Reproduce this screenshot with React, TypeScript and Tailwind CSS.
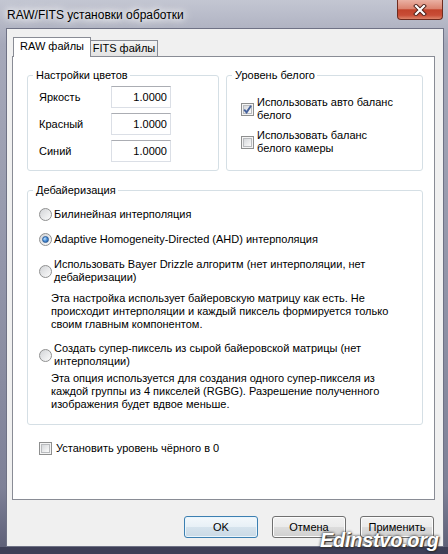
import type { ReactNode } from 'react'

function CheckBox({ checked = false }: { checked?: boolean }) {
  return (
    <span className="relative flex h-[13px] w-[13px] shrink-0 items-center justify-center border border-[#8e8f8f] bg-[#f4f4f4]">
      <span className="h-[9px] w-[9px] border border-[#b9bbbe] bg-gradient-to-br from-[#d6d8db] to-[#fbfbfb]" />
      {checked ? (
        <svg
          className="absolute left-[0px] top-[0px]"
          width="11"
          height="11"
          viewBox="0 0 11 11"
        >
          <path
            d="M2.2 5.6 L4.6 8.4 L9 1.8"
            fill="none"
            stroke="#45629d"
            strokeWidth="1.9"
          />
        </svg>
      ) : null}
    </span>
  )
}

function Radio({ checked = false }: { checked?: boolean }) {
  return (
    <span className="flex h-[13px] w-[13px] shrink-0 items-center justify-center rounded-full border border-[#8f9090] bg-gradient-to-br from-[#d2d4d7] to-[#fcfcfc]">
      {checked ? (
        <span className="h-[7px] w-[7px] rounded-full border border-[#2b5c98] bg-[radial-gradient(circle_at_35%_35%,#c4e3ff_0%,#4f95dd_45%,#1b4f93_100%)]" />
      ) : null}
    </span>
  )
}

function GroupBox({
  title,
  className,
  children,
}: {
  title: string
  className: string
  children: ReactNode
}) {
  return (
    <fieldset
      className={`min-w-0 rounded-[3px] border border-[#d5dfe5] ${className}`}
    >
      <legend className="ml-[5px] pl-[3px] pr-[2px]">{title}</legend>
      {children}
    </fieldset>
  )
}

function NumberBox({ value }: { value: string }) {
  return (
    <div className="flex h-[22px] w-[60px] items-center justify-end border border-[#dbdfe6] border-t-[#abadb3] bg-white pr-[3px]">
      {value}
    </div>
  )
}

function WinButton({
  children,
  primary = false,
}: {
  children: ReactNode
  primary?: boolean
}) {
  return (
    <button
      type="button"
      className={`flex h-[22px] w-[74px] items-center justify-center rounded-[3px] border ${
        primary
          ? 'border-[#3c7fb1] bg-[linear-gradient(180deg,#f3f8fb_0%,#e7f0f6_50%,#d5e3ed_50%,#cad9e5_100%)] shadow-[inset_0_0_0_1px_#e9f5fc]'
          : 'border-[#707070] bg-[linear-gradient(180deg,#f2f2f2_0%,#ebebeb_50%,#dddddd_50%,#cfcfcf_100%)] shadow-[inset_0_0_0_1px_#fcfcfc]'
      }`}
    >
      {children}
    </button>
  )
}

const SETTINGS = [
  { label: 'Яркость', value: '1.0000' },
  { label: 'Красный', value: '1.0000' },
  { label: 'Синий', value: '1.0000' },
]

export default function App() {
  return (
    <div className="relative flex h-[554px] w-[448px] flex-col overflow-hidden bg-[linear-gradient(180deg,#c3c6d2_0%,#a6a9ba_8%,#9295a9_50%,#7e8197_88%,#5b5d75_100%)] font-['Liberation_Sans',Arial,sans-serif] text-[11px] leading-[13px] text-black">
      {/* title bar */}
      <div className="flex h-[28px] shrink-0 items-start justify-between">
        <div className="pl-[7px] pt-[7px] text-[12px] leading-[16px] [text-shadow:0_0_6px_#fff,0_0_10px_#fff,0_0_14px_rgba(255,255,255,0.9)]">
          RAW/FITS установки обработки
        </div>
        <div className="mr-[5px] flex h-[20px] w-[46px] items-center justify-center rounded-b-[4px] border border-t-0 border-[#6e2b1e] bg-[linear-gradient(180deg,#eab1a3_0%,#db8470_45%,#c2432b_52%,#c84d36_80%,#dd8469_100%)]">
          <svg width="14" height="12" viewBox="0 0 14 12">
            <path
              d="M3 2 L11 10 M11 2 L3 10"
              stroke="#4a1f18"
              strokeWidth="4"
              strokeLinecap="square"
            />
            <path
              d="M3 2 L11 10 M11 2 L3 10"
              stroke="#ffffff"
              strokeWidth="2.2"
              strokeLinecap="square"
            />
          </svg>
        </div>
      </div>

      {/* client area */}
      <div className="ml-[6px] flex h-[519px] w-[438px] shrink-0 flex-col border border-[#6f7285] bg-[#f0f0f0]">
        <div className="pl-[5px] pt-[8px]">
          <div className="flex h-[19px] items-end pl-[1px]">
            <div className="relative z-10 -mb-[1px] flex h-[20px] w-[78px] items-center justify-center border border-b-0 border-[#898c95] bg-white pb-[2px]">
              RAW файлы
            </div>
            <div className="flex h-[16px] w-[67px] items-center justify-center border border-b-0 border-l-0 border-[#898c95] bg-gradient-to-b from-[#f3f3f3] to-[#e3e3e3]">
              FITS файлы
            </div>
          </div>

          <div className="h-[444px] w-[423px] border border-[#898c95] bg-white">
            <div className="flex flex-col pl-[14px] pt-[12px]">
              <div className="flex gap-[7px]">
                <GroupBox title="Настройки цветов" className="h-[102px] w-[192px]">
                  <div className="flex flex-col gap-[5px] pl-[11px] pt-[4px]">
                    {SETTINGS.map((row) => (
                      <div key={row.label} className="flex items-center">
                        <span className="w-[72px]">{row.label}</span>
                        <NumberBox value={row.value} />
                      </div>
                    ))}
                  </div>
                </GroupBox>

                <GroupBox title="Уровень белого" className="h-[102px] w-[197px]">
                  <div className="flex flex-col gap-[7px] pl-[14px] pt-[14px]">
                    <div className="flex items-center gap-[3px]">
                      <CheckBox checked />
                      <span>
                        Использовать авто баланс
                        <br />
                        белого
                      </span>
                    </div>
                    <div className="flex items-center gap-[3px]">
                      <CheckBox />
                      <span>
                        Использовать баланс
                        <br />
                        белого камеры
                      </span>
                    </div>
                  </div>
                </GroupBox>
              </div>

              <GroupBox title="Дебайеризация" className="mt-[13px] h-[241px] w-[396px]">
                <div className="flex flex-col whitespace-nowrap pl-[11px] pt-[11px]">
                  <div className="flex items-center gap-[2px]">
                    <Radio />
                    <span>Билинейная интерполяция</span>
                  </div>
                  <div className="mt-[12px] flex items-center gap-[2px]">
                    <Radio checked />
                    <span>Adaptive Homogeneity-Directed (AHD) интерполяция</span>
                  </div>
                  <div className="mt-[12px] flex items-center gap-[2px]">
                    <Radio />
                    <span>
                      Использовать Bayer Drizzle алгоритм (нет интерполяции, нет
                      <br />
                      дебайеризации)
                    </span>
                  </div>
                  <p className="ml-[12px] mt-[8px]">
                    Эта настройка использует байеровскую матрицу как есть. Не
                    <br />
                    происходит интерполяции и каждый пиксель формируется только
                    <br />
                    своим главным компонентом.
                  </p>
                  <div className="mt-[11px] flex items-center gap-[2px]">
                    <Radio />
                    <span>
                      Создать супер-пиксель из сырой байеровской матрицы (нет
                      <br />
                      интерполяции)
                    </span>
                  </div>
                  <p className="ml-[12px] mt-[4px]">
                    Эта опция используется для создания одного супер-пикселя из
                    <br />
                    каждой группы из 4 пикселей (RGBG). Разрешение полученного
                    <br />
                    изображения будет вдвое меньше.
                  </p>
                </div>
              </GroupBox>

              <div className="ml-[12px] mt-[17px] flex items-center gap-[4px]">
                <CheckBox />
                <span>Установить уровень чёрного в 0</span>
              </div>
            </div>
          </div>
        </div>

        <div className="mt-[16px] flex justify-end gap-[14px] pr-[9px]">
          <WinButton primary>OK</WinButton>
          <WinButton>Отмена</WinButton>
          <WinButton>Применить</WinButton>
        </div>
      </div>
      <div className="h-[7px] shrink-0 bg-[#3e3f57]" />

      <span className="absolute left-[320px] top-[530px] text-[20px] font-bold italic leading-none tracking-[-0.3px] text-white [text-shadow:1px_1px_1px_#333,0_0_3px_#000]">
        Edinstvo.org
      </span>
    </div>
  )
}
